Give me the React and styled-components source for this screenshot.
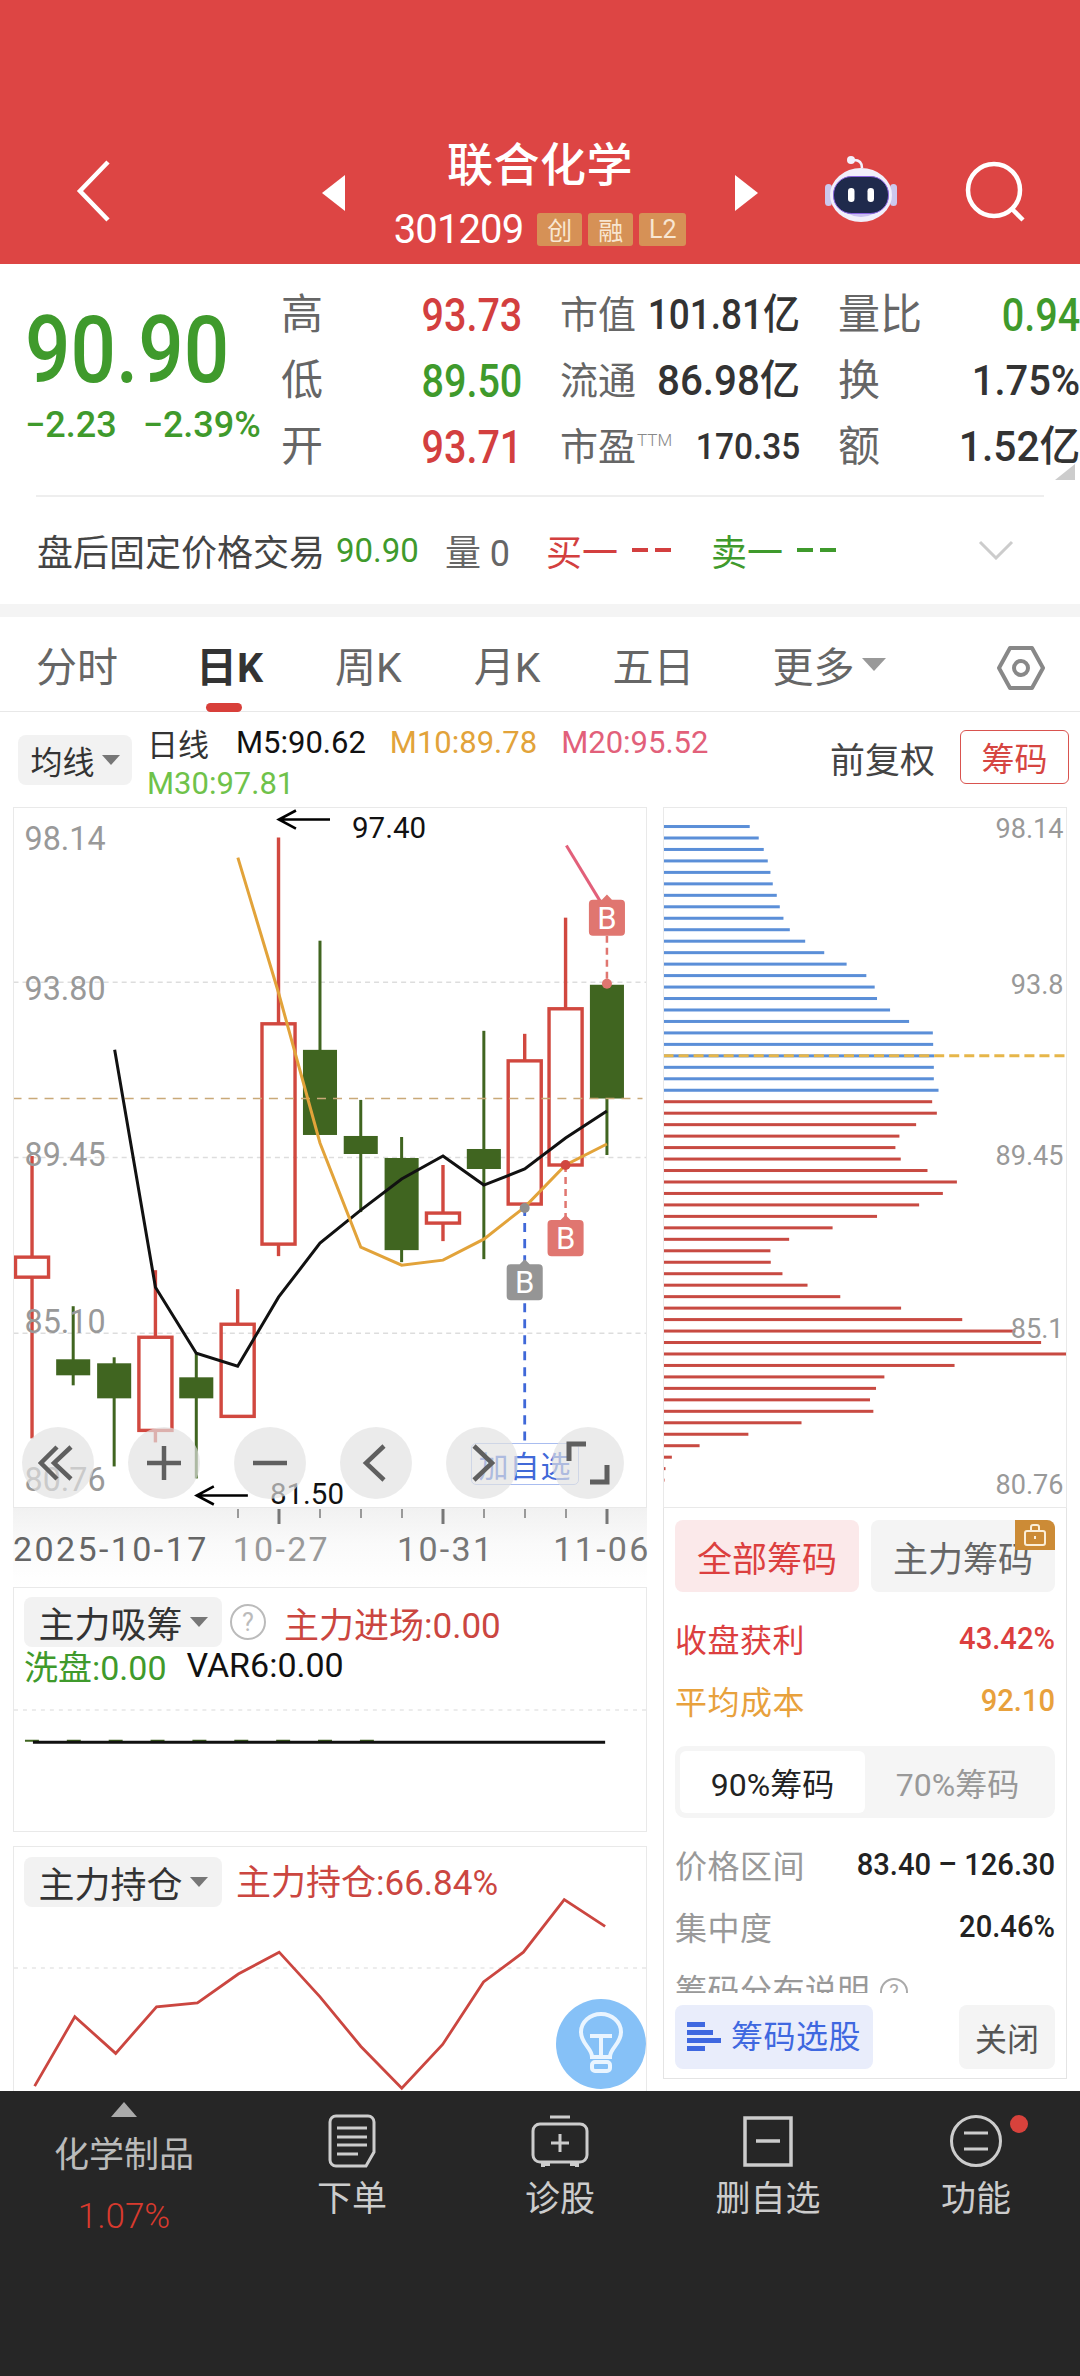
import React from 'react';
import styled, { createGlobalStyle } from 'styled-components';

const Global = createGlobalStyle`
  * { box-sizing: border-box; }
  html, body { margin: 0; padding: 0; background: #fff; }
  body { font-family: Roboto, "Noto Sans CJK SC", sans-serif; }
`;
const CN = `Roboto, "Noto Sans CJK SC", sans-serif`;

const Page = styled.div`
  width: 1080px; height: 2376px; overflow: hidden; display: flex; flex-direction: column; background: #fff; font-family: ${CN};
`;
/* header */
const Header = styled.header`
  height: 264px; flex: none; background: #dd4544; display: flex; align-items: flex-start; padding-top: 137px; color: #fff;
`;
const HeadSlot = styled.div`
  flex: none; margin: ${p => p.$top}px 0 0 ${p => p.$left}px; line-height: 0;
`;
const TitleBlock = styled.div`
  width: 390px; flex: none; display: flex; flex-direction: column; align-items: center;
`;
const Title = styled.div`
  font-size: 46px; line-height: 56px; font-weight: 500; letter-spacing: 0.5px; margin-bottom: 14px;
`;
const CodeRow = styled.div`
  height: 44px; display: flex; align-items: center; gap: 6px;
`;
const Code = styled.span`
  font-size: 40px; letter-spacing: -0.9px; margin-right: 8px; color: #fff;
`;
const Badge = styled.span`
  height: 33px; width: ${p => p.$w || 45}px; background: #d69156; border-radius: 3px; color: #f8e6d2; font-size: 25px;
  display: flex; align-items: center; justify-content: center;
`;
/* quote */
const Quote = styled.section`
  height: 340px; flex: none; position: relative; background: #fff;
  &::after {
    content: ""; position: absolute; right: 5px; top: 200px; width: 0; height: 0;
    border-left: 20px solid transparent; border-bottom: 16px solid #ccc;
  }
`;
const QuoteTop = styled.div`
  display: flex; padding-top: 18px; height: 231px;
`;
const PriceCol = styled.div`
  width: 281px; flex: none; padding-left: 25px; display: flex; flex-direction: column;
`;
const BigPrice = styled.div`
  font-size: 92px; line-height: 92px; font-weight: 500; color: #3f9a2c; margin-top: 23px; transform: scaleX(.87); transform-origin: left;
`;
const ChangeRow = styled.div`
  display: flex; gap: 26px; font-size: 36px; line-height: 46px; color: #3f9a2c; margin-top: 5px; white-space: nowrap; font-weight: 500;
`;
const Cond = styled.span`
  display: inline-block; white-space: nowrap; line-height: 1; margin-left: -80px; transform: scaleX(${p => p.$s || .86}); transform-origin: right;
  color: ${p => p.$c || '#333'}; font-size: ${p => p.$f || 46}px;
  font-weight: ${p => p.$w || 500};
`;
const StatGrid = styled.div`
  display: grid; grid-template-columns: 241px 240px 242px; column-gap: 38px; grid-auto-rows: 66px;
`;
const Stat = styled.div`
  display: flex; align-items: center; justify-content: space-between; white-space: nowrap;
`;
const StatLabel = styled.span`
  font-size: ${p => p.$f || 42}px; color: #666; line-height: 1; flex: none;
`;
const Sup = styled.sup`
  font-size: 17px; color: #888; font-weight: 300; vertical-align: 14px; line-height: 0; margin-left: 1px;
`;
const Divider = styled.div`
  height: 1.5px; background: #eee; margin: 0 36px;
`;
const AfterRow = styled.div`
  height: 107.5px; display: flex; align-items: center; padding-left: 37px; font-size: 36px; color: #444; white-space: nowrap; position: relative;
`;
const AfterText = styled.span`
  color: ${p => p.$c || '#444'}; margin-left: ${p => p.$l || 0}px; font-size: ${p => p.$f || 36}px; display: flex; align-items: center;
`;
const DashBars = styled.span`
  display: flex; gap: 7px; margin-left: 14px;
  &::before, &::after { content: ""; width: 16px; height: 4px; background: ${p => p.$c}; }
`;
const Gap = styled.div`
  height: 13px; flex: none; background: #f4f4f4;
`;
/* tabs */
const Tabs = styled.nav`
  height: 95px; flex: none; display: flex; align-items: stretch; gap: 72px; padding-left: 36px; border-bottom: 1.5px solid #e8e8e8; position: relative;
`;
const Tab = styled.div`
  position: relative; display: flex; align-items: center; font-size: 41px; white-space: nowrap;
  color: ${p => p.$on ? '#333' : '#666'}; font-weight: ${p => p.$on ? 700 : 400};
  margin-left: ${p => p.$l || 0}px;
  ${p => p.$on && `&::after { content: ""; position: absolute; left: 10px; bottom: -1px; width: 36px; height: 9px; border-radius: 5px; background: #d83f3a; }`}
`;
const Caret = styled.span`
  display: inline-block; width: 0; height: 0; margin-left: ${p => p.$ml ?? 7}px; border-left: ${p => p.$s || 12}px solid transparent; border-right: ${p => p.$s || 12}px solid transparent;
  border-top: ${p => (p.$s || 12) * 1.15}px solid ${p => p.$c || '#777'}; flex: none;
`;
const HexBtn = styled.div`
  position: absolute; right: 35px; top: 28px; line-height: 0;
`;
/* legend */
const LegendBar = styled.div`
  height: 95px; flex: none; display: flex; padding-left: 18px; position: relative;
`;
const Drop = styled.div`
  flex: none; width: ${p => p.$w || 114}px; height: ${p => p.$h || 50}px; margin-top: ${p => p.$t || 0}px; background: #f2f2f2; border-radius: 8px;
  display: flex; align-items: center; justify-content: center; color: #333; font-size: ${p => p.$f || 32}px; white-space: nowrap;
`;
const LegendLines = styled.div`
  padding: 10px 0 0 15px; width: 590px; flex: none;
`;
const LegendLine = styled.div`
  display: flex; gap: 24px; height: 41px; align-items: center; white-space: nowrap; font-size: 31px; padding-left: ${p => p.$l || 0}px;
`;
const Lg = styled.span`
  color: ${p => p.$c}; margin-left: ${p => p.$l || 0}px;
`;
const LegendRight = styled.div`
  flex: 1; display: flex; align-items: center; justify-content: flex-end; gap: 25px; padding: 0 11px 0 0; height: 90px;
`;
const Fq = styled.span`
  font-size: 35px; color: #444; white-space: nowrap;
`;
const ChipBtn = styled.div`
  width: 109px; height: 54px; border: 1.5px solid #d9534f; border-radius: 6px; color: #d64541; font-size: 33px; display: flex; align-items: center; justify-content: center;
`;
/* chart layout */
const ContentRow = styled.div`
  height: 1284px; flex: none; overflow: hidden; display: flex; gap: 16px; padding: 0 13px;
`;
const LeftCol = styled.div`
  width: 634px; flex: none; display: flex; flex-direction: column;
`;
const RightCol = styled.div`
  width: 404px; flex: none; display: flex; flex-direction: column;
`;
const ChartBox = styled.div`
  height: 701px; flex: none; position: relative; border: 1.5px solid #e9e9e9;
  & > svg { display: block; width: 100%; height: 100%; }
`;
const Controls = styled.div`
  position: absolute; left: 8px; top: 619px; display: flex; gap: 34px; z-index: 2;
`;
const CtlBtn = styled.div`
  width: 72px; height: 72px; border-radius: 50%; background: rgba(226,226,226,.68); display: flex; align-items: center; justify-content: center; line-height: 0;
`;
const AddBox = styled.div`
  position: absolute; left: 457px; top: 635px; width: 108px; height: 42px; border: 1.5px solid #a9bdf0; border-radius: 5px; color: #4169d8; font-size: 30px;
  display: flex; align-items: center; justify-content: center; white-space: nowrap; letter-spacing: 1px; z-index: 1; background: rgba(255,255,255,.6);
`;
const DateAxis = styled.div`
  height: 79px; flex: none; display: flex; flex-direction: column; background: linear-gradient(180deg, #f1f1f1 0%, #fafafa 45%, #fff 100%);
  & > svg { display: block; flex: none; }
`;
const DateRow = styled.div`
  display: flex; height: 46px; margin-top: 2px; align-items: center;
`;
const DateText = styled.span`
  font-size: 34px; white-space: nowrap; letter-spacing: ${p => p.$ls || 2.3}px; color: ${p => p.$c || '#666'}; margin-left: ${p => p.$l || 0}px;
`;
const IndPanel = styled.div`
  position: relative; flex: none; height: ${p => p.$h}px; margin-top: ${p => p.$t || 0}px; border: 1.5px solid #e9e9e9; padding: ${p => p.$p}px 0 0 10px; overflow: hidden;
  & > svg { position: absolute; left: 0; top: 0; width: 100%; height: 100%; }
`;
const IndRow = styled.div`
  display: flex; align-items: center; height: ${p => p.$h || 50}px; white-space: nowrap; position: relative; z-index: 1;
`;
const IndText = styled.span`
  font-size: ${p => p.$f || 35}px; color: ${p => p.$c}; margin: ${p => p.$t || 0}px 0 0 ${p => p.$l || 0}px; display: inline-block;
`;
const Help = styled.span`
  width: 36px; height: 36px; border-radius: 50%; border: 2.5px solid #bbb; color: #bbb; font-size: 25px; display: flex; align-items: center; justify-content: center; margin-left: 8px; flex: none;
`;
const Bulb = styled.div`
  position: absolute; left: 542px; top: 152px; width: 90px; height: 90px; border-radius: 50%; background: #86c1f7; display: flex; align-items: center; justify-content: center; line-height: 0; z-index: 2;
  & svg { position: static; width: auto; height: auto; }
`;
/* chip panel */
const ChipPanel = styled.div`
  height: 571px; flex: none; border: 1.5px solid #e4e4e4; border-top: none; padding: 12px 11px 0; display: flex; flex-direction: column;
`;
const ChipTabs = styled.div`
  display: flex; gap: 12px; height: 72px; flex: none; margin-bottom: 15px;
`;
const ChipTab = styled.div`
  flex: 1; border-radius: 8px; position: relative; display: flex; align-items: center; justify-content: center; font-size: 35px; overflow: hidden; white-space: nowrap;
  background: ${p => p.$on ? '#fbe9ea' : '#f4f4f4'}; color: ${p => p.$on ? '#dc3f3f' : '#666'};
`;
const LockBadge = styled.span`
  position: absolute; right: 0; top: 0; width: 40px; height: 30px; background: #cc8b36; display: flex; align-items: center; justify-content: center; line-height: 0;
`;
const KV = styled.div`
  height: ${p => p.$h || 62}px; flex: none; display: flex; justify-content: space-between; align-items: center; font-size: 32px; white-space: nowrap; color: ${p => p.$c}; letter-spacing: .5px;
`;
const KVVal = styled.span`
  display: inline-block; transform: scaleX(.94); transform-origin: right; letter-spacing: 0;
  color: ${p => p.$c}; font-weight: ${p => p.$w || 400}; font-size: 31px;
`;
const Segment = styled.div`
  height: 72px; flex: none; margin: 15px 0 15px; background: #f5f5f5; border-radius: 10px; padding: 5px; display: flex;
`;
const SegItem = styled.div`
  width: 185px; border-radius: 6px; flex: ${p => p.$on ? 'none' : 1}; background: ${p => p.$on ? '#fff' : 'transparent'}; color: ${p => p.$on ? '#222' : '#999'}; font-size: 32px;
  display: flex; align-items: center; justify-content: center; white-space: nowrap;
`;
const ClipRow = styled.div`
  height: 36px; flex: none; overflow: hidden; padding-top: 15px; color: #999; font-size: 32px; line-height: 38px; display: flex; gap: 10px; white-space: nowrap; letter-spacing: .5px;
`;
const ClipHelp = styled.span`
  width: 28px; height: 28px; border-radius: 50%; border: 2px solid #aaa; font-size: 20px; color: #aaa; display: flex; align-items: center; justify-content: center; margin-top: 6px; letter-spacing: 0;
`;
const ChipActions = styled.div`
  display: flex; justify-content: space-between; margin-top: 12px; height: 64px; flex: none;
`;
const PickBtn = styled.div`
  width: 198px; border-radius: 8px; background: #e9edfb; color: #3f68e0; font-size: 32px; display: flex; align-items: center; justify-content: center; gap: 10px; line-height: 1; white-space: nowrap; letter-spacing: .5px;
`;
const CloseBtn = styled.div`
  width: 96px; border-radius: 8px; background: #f4f4f4; color: #555; font-size: 32px; display: flex; align-items: center; justify-content: center; white-space: nowrap;
`;
/* bottom */
const BottomNav = styled.footer`
  flex: none; height: 285px; background: #262626; display: grid; grid-template-columns: 248px repeat(4, 208px); color: #ccc;
`;
const NavSector = styled.div`
  padding-top: 11px; display: flex; flex-direction: column; align-items: center;
`;
const UpTri = styled.span`
  width: 0; height: 0; border-left: 13px solid transparent; border-right: 13px solid transparent; border-bottom: 15px solid #aaa;
`;
const SectorName = styled.span`
  font-size: 35px; line-height: 46px; margin-top: 16px; color: #bbb; white-space: nowrap;
`;
const SectorPct = styled.span`
  font-size: 35px; line-height: 40px; margin-top: 18px; color: #d83a2e; font-weight: 300;
`;
const NavItem = styled.div`
  position: relative; padding-top: 23px; display: flex; flex-direction: column; align-items: center;
  & > svg { display: block; flex: none; }
`;
const NavLabel = styled.span`
  font-size: 35px; line-height: 44px; margin-top: 10px; white-space: nowrap; color: #ccc;
`;
const RedDot = styled.span`
  position: absolute; width: 18px; height: 18px; border-radius: 50%; background: #d8423c; top: 24px; left: 138px;
`;

/* ----- data ----- */
const R = '#d1483f', G = '#406520';
const candles = [
  [32.5, 1156, 1438, 1257, 1277, 'r'], [73.6, 1306, 1385, 1359, 1375, 'g'], [114.5, 1357, 1466, 1363, 1398, 'g'],
  [155.7, 1270, 1442, 1337, 1430, 'r'], [196.5, 1352, 1478, 1377, 1398, 'g'], [237.8, 1289, 1416, 1324, 1416, 'r'],
  [278.6, 838, 1256, 1024, 1244, 'r'], [320, 941, 1135, 1050, 1135, 'g'], [360.7, 1100, 1212, 1136, 1154, 'g'],
  [401.5, 1137, 1262, 1158, 1250, 'g'], [442.8, 1165, 1241, 1213, 1223, 'r'], [483.6, 1031, 1259, 1149, 1169, 'g'],
  [524.4, 1034, 1204, 1061, 1204, 'r'], [565.2, 918, 1165, 1009, 1165, 'r'], [606.5, 985, 1155, 985, 1098.6, 'g'],
];
const m5 = '115,1050 155.7,1287 196.5,1353 237.8,1366 278.6,1297 320,1243 360.7,1210 401.5,1179 442.8,1156 483.6,1185 524.4,1169 565.2,1138 606.5,1111';
const m10 = '238,858 278.6,993 320,1143 360.7,1247 401.5,1265 442.8,1260 483.6,1239 524.4,1207 565.2,1165 606.5,1144';
const hold = '33.7,2087 74,2017 115,2054 156,2007 197,2003 238,1974 279,1952 320,1997 361,2047 402,2089 443,2045 484,1982 524,1952 565,1899 606,1926';
const chipEnds = [300,327,342,354,362,369,381,390,401,420,466,523,590,649,674,681,720,777,848,849,852,851,851,865,
  846,860,798,748,736,752,832,920,878,807,681,548,418,362,363,398,473,571,753,936,1095,1172,1250,913,703,678,660,670,455,296,150,67,48,45];

const GridLabel = ({ y, children }) => (
  <text x="25" y={y} fontSize="33" fill="#999" textLength="81" lengthAdjust="spacingAndGlyphs" fontFamily="Roboto">{children}</text>
);
const BTag = ({ x, y, c, label = 'B' }) => (
  <g>
    <path d={`M${x - 18} ${y + 4} a4 4 0 0 1 4 -4 H${x - 5} L${x} ${y - 5} L${x + 5} ${y} H${x + 14} a4 4 0 0 1 4 4 V${y + 32} a4 4 0 0 1 -4 4 H${x - 14} a4 4 0 0 1 -4 -4 Z`} fill={c} />
    <text x={x} y={y + 29} fontSize="31" fill="#fff" textAnchor="middle" fontFamily="Roboto">{label}</text>
  </g>
);

const MainChart = () => (
  <svg viewBox="14.5 808.5 631 698" preserveAspectRatio="none">
    {[982.5, 1157.5, 1333].map(y => <line key={y} x1="14" x2="646" y1={y} y2={y} stroke="#ddd" strokeWidth="1.5" strokeDasharray="5 4" />)}
    {candles.map(([x, wt, wb, bt, bb, k], i) => k === 'r' ? (
      <g key={i} stroke={R} strokeWidth="3.4" fill="none">
        <line x1={x} x2={x} y1={wt} y2={bt} />
        <line x1={x} x2={x} y1={bb} y2={wb} />
        <rect x={x - 16.5} y={bt} width="33" height={bb - bt} />
      </g>
    ) : (
      <g key={i}>
        <line x1={x} x2={x} y1={wt} y2={wb} stroke={G} strokeWidth="3" />
        <rect x={x - 17} y={bt} width="34" height={bb - bt} fill={G} />
      </g>
    ))}
    <line x1="13" x2="642" y1="1098.6" y2="1098.6" stroke="#c9a978" strokeWidth="1.5" strokeDasharray="9 7" />
    <polyline points={m5} fill="none" stroke="#111" strokeWidth="3" />
    <polyline points={m10} fill="none" stroke="#e2a33a" strokeWidth="3" />
    <line x1="566" y1="846" x2="600" y2="902" stroke="#e2607a" strokeWidth="3" />
    <GridLabel y="850">98.14</GridLabel>
    <GridLabel y="1000">93.80</GridLabel>
    <GridLabel y="1166">89.45</GridLabel>
    <GridLabel y="1333">85.10</GridLabel>
    <GridLabel y="1491">80.76</GridLabel>
    <path d="M330 820 H280 M296 811 L279 820 L296 829" fill="none" stroke="#000" strokeWidth="2.6" />
    <text x="352" y="838" fontSize="29" fill="#111" textLength="74" lengthAdjust="spacingAndGlyphs" fontFamily="Roboto">97.40</text>
    <path d="M248 1495 H198 M214 1486 L197 1495 L214 1504" fill="none" stroke="#000" strokeWidth="2.6" />
    <text x="270" y="1504" fontSize="29" fill="#111" textLength="74" lengthAdjust="spacingAndGlyphs" fontFamily="Roboto">81.50</text>
    <line x1="606.5" x2="606.5" y1="936" y2="985" stroke="#e07670" strokeWidth="2.5" strokeDasharray="7 5" />
    <circle cx="606.5" cy="984" r="5" fill="#e07670" />
    <line x1="565.2" x2="565.2" y1="1165" y2="1220" stroke="#e07670" strokeWidth="2.5" strokeDasharray="7 5" />
    <circle cx="565.2" cy="1165" r="5" fill="#d1483f" />
    <line x1="524.4" x2="524.4" y1="1207" y2="1443" stroke="#3f68d8" strokeWidth="2.8" strokeDasharray="9 7" />
    <circle cx="524.4" cy="1208" r="5" fill="#8f8f8f" />
    <BTag x={606.5} y={900} c="#e07670" />
    <BTag x={565.2} y={1220} c="#e07670" />
    <BTag x={524.4} y={1264} c="#959595" />
  </svg>
);
const ChipChart = () => (
  <svg viewBox="664.5 808.5 401 698" preserveAspectRatio="none">
    {chipEnds.map((e, i) => (
      <rect key={i} x="664" y={825.5 + i * 11.45} width={(e - 42) / 3} height="3" fill={i < 24 ? '#5b8fd8' : '#c84a42'} />
    ))}
    <line x1="664" x2="1064" y1="1056" y2="1056" stroke="#e6b64a" strokeWidth="3" strokeDasharray="10 5" />
    {[['98.14', 838], ['93.8', 994], ['89.45', 1165], ['85.1', 1338], ['80.76', 1494]].map(([t, y]) => (
      <text key={t} x="1063" y={y} fontSize="27" fill="#999" textAnchor="end" fontFamily="Roboto">{t}</text>
    ))}
  </svg>
);
const Ticks = () => (
  <svg width="634" height="16" viewBox="13 1508 634 16">
    {[238, 320, 361, 402, 484, 525, 566].map(x => <line key={x} x1={x} x2={x} y1="1509" y2="1518" stroke="#999" strokeWidth="2" />)}
    {[279, 443, 607].map(x => <line key={x} x1={x} x2={x} y1="1509" y2="1524" stroke="#777" strokeWidth="3" />)}
  </svg>
);
const ic = { width: 40, height: 40, fill: 'none', stroke: '#5f5f5f', strokeWidth: 4.5 };
const CtlIcons = [
  <svg {...ic} viewBox="0 0 40 40"><path d="M19 4 L3 20 L19 36 M33 4 L16 20 L33 36 " /></svg>,
  <svg {...ic} viewBox="0 0 40 40"><path d="M20 3 V37 M3 20 H37" /></svg>,
  <svg {...ic} viewBox="0 0 40 40"><path d="M3 20 H37" /></svg>,
  <svg {...ic} viewBox="0 0 40 40"><path d="M28 3 L10 20 L28 37" /></svg>,
  <svg {...ic} viewBox="0 0 40 40"><path d="M12 3 L30 20 L12 37" /></svg>,
  <svg {...ic} width="44" height="44" viewBox="0 0 44 44"><path d="M3 20 V3 H20 M41 24 V41 H24" strokeWidth="5" /></svg>,
];

export default function App() {
  return (
    <Page>
      <Global />
      <Header>
        <HeadSlot $top={23} $left={76}>
          <svg width="34" height="62" viewBox="0 0 34 62" fill="none" stroke="#fff" strokeWidth="4.5"><path d="M32 2 L4 31 L32 60" /></svg>
        </HeadSlot>
        <HeadSlot $top={38} $left={212}>
          <svg width="23" height="36" viewBox="0 0 23 36"><path d="M23 0 V36 L0 18 Z" fill="#fff" /></svg>
        </HeadSlot>
        <TitleBlock>
          <Title>联合化学</Title>
          <CodeRow>
            <Code>301209</Code>
            <Badge>创</Badge>
            <Badge>融</Badge>
            <Badge $w={47}>L2</Badge>
          </CodeRow>
        </TitleBlock>
        <HeadSlot $top={38} $left={0}>
          <svg width="23" height="36" viewBox="0 0 23 36"><path d="M0 0 V36 L23 18 Z" fill="#fff" /></svg>
        </HeadSlot>
        <HeadSlot $top={19} $left={67}>
          <svg width="72" height="66" viewBox="0 0 72 66">
            <path d="M29 4 q8 0 8 8" fill="none" stroke="#f3f1fd" strokeWidth="2.5" />
            <circle cx="26" cy="4" r="4" fill="#f3f1fd" />
            <rect x="0" y="28" width="7" height="22" rx="3.5" fill="#ccc8ee" />
            <rect x="65" y="28" width="7" height="22" rx="3.5" fill="#ccc8ee" />
            <ellipse cx="36" cy="39" rx="31" ry="27" fill="#f1effb" />
            <path d="M8 46 Q36 76 64 46 Q36 68 8 46 Z" fill="#c9bff0" />
            <rect x="8.5" y="20.5" width="55" height="37" rx="18" fill="#1f2a4c" stroke="#8a63e0" strokeWidth="1" />
            <rect x="23" y="32" width="6.5" height="14" rx="3.2" fill="#fff" />
            <rect x="42.5" y="32" width="6.5" height="14" rx="3.2" fill="#fff" />
          </svg>
        </HeadSlot>
        <HeadSlot $top={23} $left={68}>
          <svg width="62" height="62" viewBox="0 0 62 62" fill="none" stroke="#fff" strokeWidth="4.5">
            <circle cx="29" cy="30" r="26" />
            <path d="M47 49 L58 60" />
          </svg>
        </HeadSlot>
      </Header>

      <Quote>
        <QuoteTop>
          <PriceCol>
            <BigPrice>90.90</BigPrice>
            <ChangeRow>
              <span>−2.23</span>
              <span>−2.39%</span>
            </ChangeRow>
          </PriceCol>
          <StatGrid>
            <Stat><StatLabel>高</StatLabel><Cond $c="#d33f3f">93.73</Cond></Stat>
            <Stat><StatLabel $f={38}>市值</StatLabel><Cond $f={42} $s={.88}>101.81亿</Cond></Stat>
            <Stat><StatLabel>量比</StatLabel><Cond $c="#3f9a2c">0.94</Cond></Stat>
            <Stat><StatLabel>低</StatLabel><Cond $c="#3f9a2c">89.50</Cond></Stat>
            <Stat><StatLabel $f={38}>流通</StatLabel><Cond $f={42} $s={.96}>86.98亿</Cond></Stat>
            <Stat><StatLabel>换</StatLabel><Cond $f={42} $s={.95}>1.75%</Cond></Stat>
            <Stat><StatLabel>开</StatLabel><Cond $c="#d33f3f">93.71</Cond></Stat>
            <Stat><StatLabel $f={38}>市盈<Sup>TTM</Sup></StatLabel><Cond $f={36} $s={.93}>170.35</Cond></Stat>
            <Stat><StatLabel>额</StatLabel><Cond $f={42} $s={.97}>1.52亿</Cond></Stat>
          </StatGrid>
        </QuoteTop>
        <Divider />
        <AfterRow>
          盘后固定价格交易
          <AfterText $c="#3f9a2c" $l={11} $f={33}>90.90</AfterText>
          <AfterText $l={26} $c="#666">量 0</AfterText>
          <AfterText $l={36} $c="#d33f3f">买一<DashBars $c="#d33f3f" /></AfterText>
          <AfterText $l={40} $c="#3f9a2c">卖一<DashBars $c="#3f9a2c" /></AfterText>
          <AfterText $l={142} style={{ lineHeight: 0 }}>
            <svg width="36" height="20" viewBox="0 0 36 20" fill="none" stroke="#ccc" strokeWidth="3"><path d="M2 2 L18 18 L34 2" /></svg>
          </AfterText>
        </AfterRow>
      </Quote>
      <Gap />

      <Tabs>
        <Tab $l={0}>分时</Tab>
        <Tab $on $l={6}>日K</Tab>
        <Tab>周K</Tab>
        <Tab>月K</Tab>
        <Tab>五日</Tab>
        <Tab $l={6}>更多<Caret $c="#999" /></Tab>
        <HexBtn>
          <svg width="48" height="46" viewBox="0 0 48 46" fill="none" stroke="#888" strokeWidth="4">
            <path d="M13 3 H35 L46 23 L35 43 H13 L2 23 Z" strokeLinejoin="round" />
            <circle cx="24" cy="23" r="7" />
          </svg>
        </HexBtn>
      </Tabs>

      <LegendBar>
        <Drop $t={23}>均线<Caret $s={9} /></Drop>
        <LegendLines>
          <LegendLine $l={0}>
            <Lg $c="#333">日线</Lg>
            <Lg $c="#111" $l={3}>M5:90.62</Lg>
            <Lg $c="#e2a33a">M10:89.78</Lg>
            <Lg $c="#e2607a">M20:95.52</Lg>
          </LegendLine>
          <LegendLine><Lg $c="#6fc24a">M30:97.81</Lg></LegendLine>
        </LegendLines>
        <LegendRight>
          <Fq>前复权</Fq>
          <ChipBtn>筹码</ChipBtn>
        </LegendRight>
      </LegendBar>

      <ContentRow>
        <LeftCol>
          <ChartBox>
            <MainChart />
            <AddBox>加自选</AddBox>
            <Controls>
              {CtlIcons.map((icon, i) => <CtlBtn key={i}>{icon}</CtlBtn>)}
            </Controls>
          </ChartBox>
          <DateAxis>
            <Ticks />
            <DateRow>
              <DateText $ls={2.4}>2025-10-17</DateText>
              <DateText $l={24} $c="#999">10-27</DateText>
              <DateText $l={67} $c="#777">10-31</DateText>
              <DateText $l={59} $c="#777">11-06</DateText>
            </DateRow>
          </DateAxis>
          <IndPanel $h={245} $p={9}>
            <svg viewBox="13 1587 634 245" preserveAspectRatio="none">
              <line x1="13" x2="647" y1="1710" y2="1710" stroke="#e6e6e6" strokeWidth="1.5" strokeDasharray="4 5" />
              <line x1="24" x2="400" y1="1741" y2="1741" stroke={G} strokeWidth="2" strokeDasharray="14 28" />
              <line x1="32" x2="606" y1="1742.5" y2="1742.5" stroke="#111" strokeWidth="3" />
            </svg>
            <IndRow>
              <Drop $w={198} $f={36}>主力吸筹<Caret $s={9} /></Drop>
              <Help>?</Help>
              <IndText $c="#cb4640" $l={18}>主力进场:0.00</IndText>
            </IndRow>
            <IndRow $h={36}>
              <IndText $c="#3f9a2c" $f={34}>洗盘:0.00</IndText>
              <IndText $c="#111" $f={34} $l={20}>VAR6:0.00</IndText>
            </IndRow>
          </IndPanel>
          <IndPanel $h={260} $t={14} $p={10}>
            <svg viewBox="13 1846 634 260" preserveAspectRatio="none">
              <line x1="13" x2="647" y1="1968" y2="1968" stroke="#e6e6e6" strokeWidth="1.5" strokeDasharray="4 5" />
              <polyline points={hold} fill="none" stroke="#cb4640" strokeWidth="2.8" />
            </svg>
            <IndRow>
              <Drop $w={198} $f={36}>主力持仓<Caret $s={9} /></Drop>
              <IndText $c="#cb4640" $l={14} $t={-5}>主力持仓:66.84%</IndText>
            </IndRow>
            <Bulb>
              <svg width="46" height="64" viewBox="0 0 46 64" fill="none" stroke="#eaf5ff" strokeWidth="4">
                <path d="M14 45 C14 36 3 32 3 20 A20 18 0 0 1 43 20 C43 32 32 36 32 45 Z" />
                <path d="M12 24 H34 M23 24 V44" />
                <rect x="14" y="50" width="18" height="9" rx="3" />
              </svg>
            </Bulb>
          </IndPanel>
        </LeftCol>
        <RightCol>
          <ChartBox><ChipChart /></ChartBox>
          <ChipPanel>
            <ChipTabs>
              <ChipTab $on>全部筹码</ChipTab>
              <ChipTab>主力筹码
                <LockBadge>
                  <svg width="24" height="24" viewBox="0 0 24 24" fill="none" stroke="#fbeed8" strokeWidth="2">
                    <rect x="2" y="8" width="20" height="14" rx="2" />
                    <path d="M8 8 V4 a2 2 0 0 1 2 -2 h4 a2 2 0 0 1 2 2 V8 M12 13 v3" />
                  </svg>
                </LockBadge>
              </ChipTab>
            </ChipTabs>
            <KV $c="#dc3f3f">收盘获利<KVVal $c="#dc3f3f" $w={500}>43.42%</KVVal></KV>
            <KV $c="#e8a13c">平均成本<KVVal $c="#e8a13c" $w={500}>92.10</KVVal></KV>
            <Segment>
              <SegItem $on>90%筹码</SegItem>
              <SegItem>70%筹码</SegItem>
            </Segment>
            <KV $c="#999">价格区间<KVVal $c="#222" $w={500}>83.40 – 126.30</KVVal></KV>
            <KV $c="#999">集中度<KVVal $c="#222" $w={500}>20.46%</KVVal></KV>
            <ClipRow>筹码分布说明<ClipHelp>?</ClipHelp></ClipRow>
            <ChipActions>
              <PickBtn>
                <svg width="34" height="30" viewBox="0 0 34 30" fill="#3f68e0">
                  <rect x="0" y="0" width="18" height="5" /><rect x="0" y="8" width="26" height="5" /><rect x="0" y="16" width="34" height="5" /><rect x="0" y="24" width="18" height="5" />
                </svg>
                筹码选股
              </PickBtn>
              <CloseBtn>关闭</CloseBtn>
            </ChipActions>
          </ChipPanel>
        </RightCol>
      </ContentRow>

      <BottomNav>
        <NavSector>
          <UpTri />
          <SectorName>化学制品</SectorName>
          <SectorPct>1.07%</SectorPct>
        </NavSector>
        <NavItem>
          <svg width="48" height="54" viewBox="0 0 48 54" fill="none" stroke="#ccc" strokeWidth="3">
            <path d="M8 2 H40 a6 6 0 0 1 6 6 V38 L38 52 H8 a6 6 0 0 1 -6 -6 V8 a6 6 0 0 1 6 -6 Z" />
            <path d="M9 14 H39 M9 23 H39 M9 31 H39 M9 40 H30" />
          </svg>
          <NavLabel>下单</NavLabel>
        </NavItem>
        <NavItem>
          <svg width="58" height="54" viewBox="0 0 58 54" fill="none" stroke="#ccc" strokeWidth="3">
            <path d="M19 3 H39" />
            <rect x="2" y="10" width="54" height="38" rx="7" />
            <path d="M29 20 V38 M20 29 H38" />
            <path d="M12 49 V53 M19 50 H12 M46 49 V53 M39 50 H46" strokeWidth="4" />
          </svg>
          <NavLabel>诊股</NavLabel>
        </NavItem>
        <NavItem>
          <svg width="50" height="54" viewBox="0 0 50 54" fill="none" stroke="#ccc" strokeWidth="3.5">
            <rect x="2" y="4" width="46" height="47" />
            <path d="M13 27 H37" />
          </svg>
          <NavLabel>删自选</NavLabel>
        </NavItem>
        <NavItem>
          <svg width="52" height="54" viewBox="0 0 52 54" fill="none" stroke="#ccc" strokeWidth="3">
            <circle cx="26" cy="27" r="24.5" />
            <path d="M14 19 H38 M14 35 H38" />
          </svg>
          <NavLabel>功能</NavLabel>
          <RedDot />
        </NavItem>
      </BottomNav>
    </Page>
  );
}
